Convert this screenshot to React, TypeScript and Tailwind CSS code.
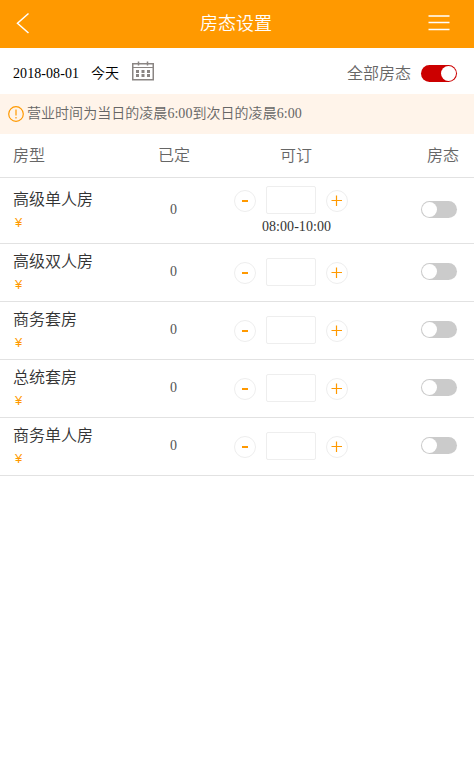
import React from "react";

type Room = { name: string; booked: number; time?: string };

const rooms: Room[] = [
  { name: "高级单人房", booked: 0, time: "08:00-10:00" },
  { name: "高级双人房", booked: 0 },
  { name: "商务套房", booked: 0 },
  { name: "总统套房", booked: 0 },
  { name: "商务单人房", booked: 0 },
];

function CalendarIcon() {
  return (
    <svg width="22" height="20" viewBox="0 0 22 20" fill="none" stroke="#8a8583">
      <path d="M0.75 2.75H21.25V18.75H0.75Z" strokeWidth="1.5" />
      <path d="M1 6.5H21" strokeWidth="1" />
      <path d="M6.5 0.5V4.5M15.5 0.5V4.5" strokeWidth="1.5" />
      <path d="M4 10.5H18M4 14.5H18" strokeWidth="3" strokeDasharray="3 2.5" />
    </svg>
  );
}

function Toggle({ on = false }: { on?: boolean }) {
  return (
    <div
      className={
        on
          ? "flex h-[17px] w-9 items-center justify-end rounded-full bg-[#cc0000] pr-[1px]"
          : "flex h-[17px] w-[36px] items-center rounded-full bg-[#cbcbcb] pl-[1px]"
      }
    >
      <div className="size-[15px] rounded-full bg-white" />
    </div>
  );
}

function StepButton({ plus = false }: { plus?: boolean }) {
  return (
    <button className="flex size-[22px] items-center justify-center rounded-full border border-[#eeeeee] bg-white">
      <svg width="12" height="12" viewBox="0 0 12 12" fill="none" stroke="#ff9900">
        {plus ? <path d="M0.5 5.5H11M5.5 0.5V11" strokeWidth="1.2" /> : <path d="M3 6H9" strokeWidth="2" />}
      </svg>
    </button>
  );
}

function RoomRow({ room }: { room: Room }) {
  return (
    <div className={`flex items-center border-b border-[#e2e2e2] ${room.time ? "h-[66px]" : "h-[58px]"}`}>
      <div className="w-[131px] pl-[13px] pt-px">
        <div className="text-[16px] leading-6 text-[#333333]">{room.name}</div>
        <div className="h-[22px] pl-[2px] font-['Liberation_Sans',sans-serif] text-[13px] leading-[22px] text-[#ff9900]">¥</div>
      </div>
      <div className="w-[84px] pb-px pl-px text-center text-[14px] leading-5 text-[#555555]">{room.booked}</div>
      <div className={`flex w-[152px] flex-col items-center ${room.time ? "" : "pb-[2px]"}`}>
        <div className="flex items-start gap-[10px]">
          <div className="pt-1"><StepButton /></div>
          <div className="h-7 w-[50px] rounded-[2px] border border-[#eeeeee] bg-white" />
          <div className="pt-1"><StepButton plus /></div>
        </div>
        {room.time && <div className="h-[22px] pl-[11px] text-[14px] leading-[25px] tracking-[0.05px] text-[#333333]">{room.time}</div>}
      </div>
      <div className="flex flex-1 pb-[2px] pl-[54px]">
        <Toggle />
      </div>
    </div>
  );
}

export default function App() {
  return (
    <div className="min-h-[771px] w-[474px] bg-white font-['Liberation_Serif','Noto_Sans_CJK_SC',serif] font-[350]">
      <header className="flex h-12 items-center justify-between bg-[#ff9900] pb-0.5 pl-4 pr-6">
        <svg width="28" height="22" viewBox="0 0 28 22" fill="none" stroke="white" strokeWidth="1.5">
          <path d="M12.5 1.5L1.5 11.3L12.5 21" />
        </svg>
        <h1 className="pt-[2px] text-[18px] leading-6 text-white">房态设置</h1>
        <svg width="22" height="16" viewBox="0 0 22 16" fill="none" stroke="white" strokeWidth="1.6">
          <path d="M0.5 1H21.5M0.5 7.5H21.5M0.5 14.5H21.5" />
        </svg>
      </header>
      <div className="flex h-[46px] items-center pl-[13px] text-[14px] text-black">
        <span className="w-[78px] pt-[5px] tracking-[0.07px]">2018-08-01</span>
        <span className="w-[41px] pt-[5px]">今天</span>
        <CalendarIcon />
        <span className="ml-auto pt-[5px] text-[16px] text-[#666666]">全部房态</span>
        <div className="ml-[10px] mr-[17px] pt-[5px]"><Toggle on /></div>
      </div>
      <div className="flex h-10 items-center bg-[#fff4ea] pl-2 text-[14px] text-[#666666]">
        <svg width="16" height="16" viewBox="0 0 16 16" fill="none" stroke="#ff9900" strokeWidth="1.2">
          <circle cx="8" cy="8" r="7.3" />
          <path d="M8 3.5V9.5M8 11V12.5" />
        </svg>
        <span className="pb-[2px] pl-[3px] tracking-[0.04px]">营业时间为当日的凌晨6:00到次日的凌晨6:00</span>
      </div>
      <div className="flex h-11 items-center border-b border-[#e2e2e2] pl-[13px] text-[16px] text-[#666666]">
        <span className="w-[145px]">房型</span>
        <span className="w-[122px]">已定</span>
        <span className="w-[147px]">可订</span>
        <span>房态</span>
      </div>
      {rooms.map((room) => (
        <RoomRow key={room.name} room={room} />
      ))}
    </div>
  );
}
